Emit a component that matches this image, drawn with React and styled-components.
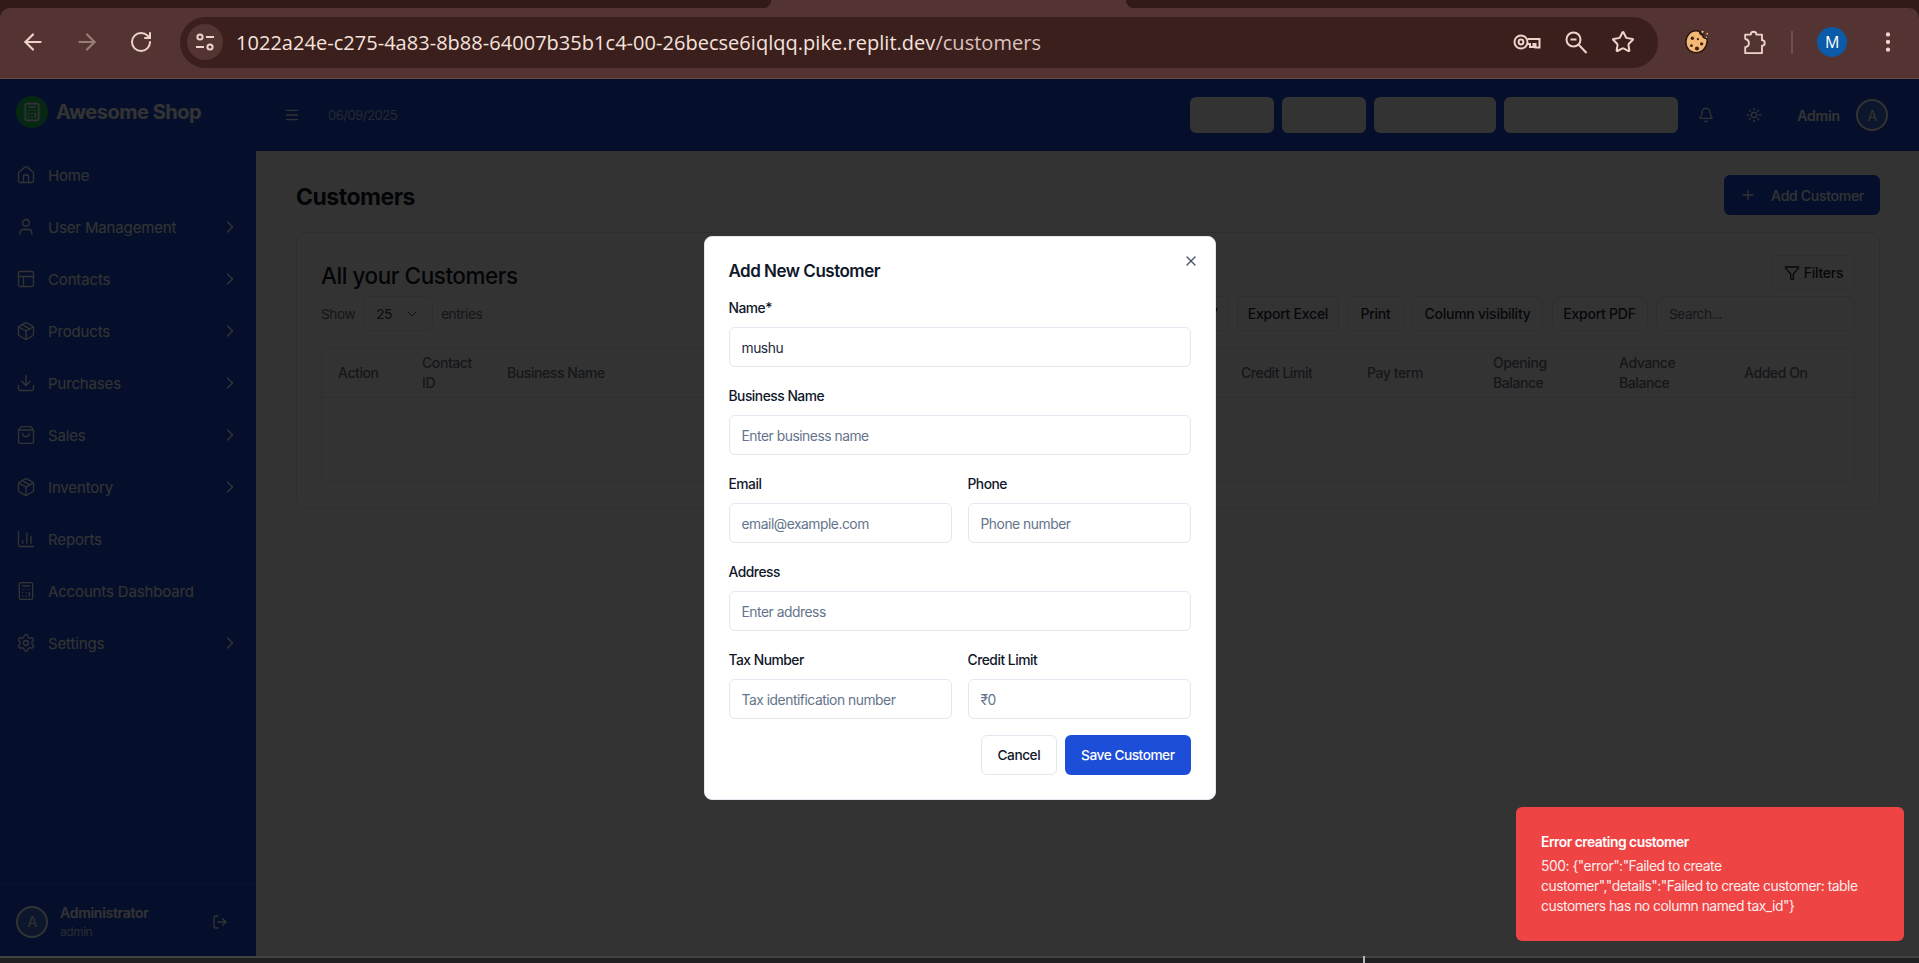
import React from "react";
import styled, { createGlobalStyle } from "styled-components";
import {
  ArrowLeft,
  ArrowRight,
  Bell,
  Calculator,
  ChartColumn,
  ChevronDown,
  ChevronRight,
  Download,
  EllipsisVertical,
  Filter,
  Home,
  LogOut,
  Menu,
  Package,
  PanelsTopLeft,
  Plus,
  RotateCw,
  Settings,
  ShoppingBag,
  Star,
  Sun,
  User,
  X,
} from "lucide-react";

const navItems = [
  { label: "Home", icon: Home },
  { label: "User Management", icon: User, more: true },
  { label: "Contacts", icon: PanelsTopLeft, more: true },
  { label: "Products", icon: Package, more: true },
  { label: "Purchases", icon: Download, more: true },
  { label: "Sales", icon: ShoppingBag, more: true },
  { label: "Inventory", icon: Package, more: true },
  { label: "Reports", icon: ChartColumn },
  { label: "Accounts Dashboard", icon: Calculator },
  { label: "Settings", icon: Settings, more: true },
];

const columns = [
  "Action",
  "Contact ID",
  "Business Name",
  "Credit Limit",
  "Pay term",
  "Opening Balance",
  "Advance Balance",
  "Added On",
];

function SiteInfoIcon() {
  return (
    <svg width="22" height="22" viewBox="0 0 22 22" fill="none" stroke="currentColor" strokeWidth="2">
      <circle cx="6" cy="6" r="2.6" />
      <path d="M12 6h8" />
      <circle cx="16" cy="16" r="2.6" />
      <path d="M2 16h8" />
    </svg>
  );
}

function KeyIcon() {
  return (
    <svg width="28" height="20" viewBox="0 0 28 20" fill="none" stroke="currentColor" strokeWidth="2">
      <circle cx="8" cy="10" r="6.5" />
      <circle cx="8" cy="10" r="2.4" />
      <path d="M14.5 7h12v8.5h-4V12h-2v3h-3.5v-3h-2.5" />
    </svg>
  );
}

function ZoomOutIcon() {
  return (
    <svg width="24" height="24" viewBox="0 0 24 24" fill="none" stroke="currentColor" strokeWidth="2">
      <circle cx="9.500" cy="9.500" r="7" />
      <path d="M6.500 9.500h6" />
      <path d="M14.500 14.500l8 8.500" />
    </svg>
  );
}

function CookieIcon() {
  return (
    <svg width="26" height="28" viewBox="0 0 28 30">
      <path
        d="M13 3c1.500 0 3 .3 4 1-.5 2 1 3.500 3 3.500.2 2 1.500 3.500 3.500 3.500 1 .2 1.500 1 1.500 2.500 0 7-5 13-12 13S2 21.500 2 15 6.500 3 13 3z"
        fill="#f3b873"
        stroke="#2b1712"
        strokeWidth="1.600"
      />
      <circle cx="9" cy="11" r="1.800" fill="#3d2417" />
      <circle cx="15" cy="12" r="1.200" fill="#3d2417" />
      <circle cx="8" cy="19" r="1.500" fill="#3d2417" />
      <circle cx="14" cy="22" r="2.200" fill="#3d2417" />
      <circle cx="19" cy="17" r="1.800" fill="#3d2417" />
      <circle cx="20" cy="4" r="1.800" fill="#f3b873" stroke="#2b1712" />
      <circle cx="25" cy="6" r="1" fill="#f3b873" />
      <circle cx="24" cy="10" r=".8" fill="#f3b873" />
    </svg>
  );
}

function PuzzleIcon() {
  return (
    <svg width="25" height="26" viewBox="0 0 26 28" fill="none" stroke="currentColor" strokeWidth="2" strokeLinejoin="round">
      <path d="M3 6h6a3 3 0 0 1 6 0h6v6a3 3 0 0 1 0 6v8H3v-6.500c3-.5 4-2.300 4-4.500s-1-3.500-4-4.500z" />
    </svg>
  );
}

function BrowserBar() {
  return (
    <Chrome>
      <TabStrip>
        <ActiveTab />
      </TabStrip>
      <Toolbar>
        <NavIcon><ArrowLeft size={26} /></NavIcon>
        <NavIcon $off><ArrowRight size={26} /></NavIcon>
        <NavIcon><RotateCw size={24} /></NavIcon>
        <UrlPill>
          <SiteInfo><SiteInfoIcon /></SiteInfo>
          <UrlText>
            1022a24e-c275-4a83-8b88-64007b35b1c4-00-26becse6iqlqq.pike.replit.dev
            <UrlPath>/customers</UrlPath>
          </UrlText>
          <UrlActions>
            <KeyIcon />
            <ZoomOutIcon />
            <Star size={24} />
          </UrlActions>
        </UrlPill>
        <ExtensionSlot><CookieIcon /></ExtensionSlot>
        <ExtensionSlot $gap={3}><PuzzleIcon /></ExtensionSlot>
        <BarDivider />
        <ProfileBadge>M</ProfileBadge>
        <KebabSlot><EllipsisVertical size={26} /></KebabSlot>
      </Toolbar>
    </Chrome>
  );
}

function Sidebar() {
  return (
    <SideColumn>
      <Brand>
        <BrandMark><Calculator size={20} /></BrandMark>
        <BrandName>Awesome Shop</BrandName>
      </Brand>
      <Nav>
        {navItems.map((item) => (
          <NavRow key={item.label}>
            <item.icon size={20} strokeWidth={1.6} />
            <NavLabel>{item.label}</NavLabel>
            {item.more && <ChevronRight size={20} strokeWidth={1.6} />}
          </NavRow>
        ))}
      </Nav>
      <SideFooter>
        <Avatar>A</Avatar>
        <UserInfo>
          <UserName>Administrator</UserName>
          <UserRole>admin</UserRole>
        </UserInfo>
        <LogOut size={16} />
      </SideFooter>
    </SideColumn>
  );
}

function TopHeader() {
  return (
    <TopBar>
      <Menu size={16} />
      <DateText>06/09/2025</DateText>
      <TopActions>
        <BlankButton $w={84} />
        <BlankButton $w={84} />
        <BlankButton $w={122} />
        <BlankButton $w={174} />
        <TopIcons>
          <Bell size={16} />
          <Sun size={16} />
        </TopIcons>
        <AdminName>Admin</AdminName>
        <Avatar>A</Avatar>
      </TopActions>
    </TopBar>
  );
}

function CustomersCard() {
  return (
    <Card>
      <CardTop>
        <CardTitle>All your Customers</CardTitle>
        <ToolButton $w={83}>
          <Filter size={16} />
          Filters
        </ToolButton>
      </CardTop>
      <Controls>
        <MutedText>Show</MutedText>
        <PageSize>
          25
          <ChevronDown size={16} strokeWidth={1.5} />
        </PageSize>
        <MutedText>entries</MutedText>
        <ControlsRight>
          <ToolButton $w={96}>Export CSV</ToolButton>
          <ToolButton $w={102}>Export Excel</ToolButton>
          <ToolButton $w={56}>Print</ToolButton>
          <ToolButton $w={131}>Column visibility</ToolButton>
          <ToolButton $w={96}>Export PDF</ToolButton>
          <SearchBox placeholder="Search..." />
        </ControlsRight>
      </Controls>
      <Table>
        <TableHead>
          {columns.map((c) => (
            <HeadCell key={c}>{c}</HeadCell>
          ))}
        </TableHead>
        <TableBody />
      </Table>
    </Card>
  );
}

function AddCustomerModal() {
  return (
    <Overlay>
      <Modal>
        <ModalTitle>Add New Customer</ModalTitle>
        <CloseIcon><X size={16} /></CloseIcon>
        <Form>
          <Field>
            <FieldLabel>Name*</FieldLabel>
            <TextInput defaultValue="mushu" />
          </Field>
          <Field>
            <FieldLabel>Business Name</FieldLabel>
            <TextInput placeholder="Enter business name" />
          </Field>
          <TwoCols>
            <Field>
              <FieldLabel>Email</FieldLabel>
              <TextInput placeholder="email@example.com" />
            </Field>
            <Field>
              <FieldLabel>Phone</FieldLabel>
              <TextInput placeholder="Phone number" />
            </Field>
          </TwoCols>
          <Field>
            <FieldLabel>Address</FieldLabel>
            <TextInput placeholder="Enter address" />
          </Field>
          <TwoCols>
            <Field>
              <FieldLabel>Tax Number</FieldLabel>
              <TextInput placeholder="Tax identification number" />
            </Field>
            <Field>
              <FieldLabel>Credit Limit</FieldLabel>
              <TextInput placeholder="₹0" />
            </Field>
          </TwoCols>
        </Form>
        <ModalActions>
          <CancelButton>Cancel</CancelButton>
          <SaveButton>Save Customer</SaveButton>
        </ModalActions>
      </Modal>
    </Overlay>
  );
}

export default function App() {
  return (
    <>
      <GlobalStyle />
      <Window>
        <BrowserBar />
        <AppArea>
          <Sidebar />
          <RightColumn>
            <TopHeader />
            <Content>
              <PageHead>
                <PageTitle>Customers</PageTitle>
                <AddButton>
                  <Plus size={16} />
                  Add Customer
                </AddButton>
              </PageHead>
              <CustomersCard />
            </Content>
          </RightColumn>
          <AddCustomerModal />
          <Toast>
            <ToastTitle>Error creating customer</ToastTitle>
            <ToastText>
              500: {'{"error":"Failed to create customer","details":"Failed to create customer: table customers has no column named tax_id"}'}
            </ToastText>
          </Toast>
        </AppArea>
        <TaskStrip>
          <TaskTick />
        </TaskStrip>
      </Window>
    </>
  );
}

const GlobalStyle = createGlobalStyle`
  * {
    box-sizing: border-box;
  }
  html, body {
    margin: 0;
    height: 100%;
    overflow: hidden;
    background: #333;
    font-family: Inter, "Liberation Sans", sans-serif;
    letter-spacing: -0.03em;
  }
  #root {
    height: 100%;
  }
  input, button {
    letter-spacing: inherit;
  }
`;

const Window = styled.div`
  display: flex;
  flex-direction: column;
  height: 963px;
`;

const Chrome = styled.div`
  flex: none;
  height: 79px;
  background: #321b17;
`;

const TabStrip = styled.div`
  height: 8px;
  padding-left: 771px;
`;

const ActiveTab = styled.div`
  position: relative;
  width: 355px;
  height: 8px;
  background: #533432;

  &::before,
  &::after {
    content: "";
    position: absolute;
    bottom: 0;
    width: 8px;
    height: 8px;
  }
  &::before {
    left: -8px;
    background: radial-gradient(circle at 0 0, transparent 8px, #533432 8.5px);
  }
  &::after {
    right: -8px;
    background: radial-gradient(circle at 100% 0, transparent 8px, #533432 8.5px);
  }
`;

const Toolbar = styled.div`
  display: flex;
  align-items: center;
  height: 71px;
  padding: 0 18px 2px 6px;
  background: #533432;
  border-bottom: 1px solid #6b4a46;
  border-radius: 10px 10px 0 0;
  color: #efd3cb;
`;

const NavIcon = styled.div`
  display: flex;
  justify-content: center;
  width: 54px;
  opacity: ${(p) => (p.$off ? 0.45 : 1)};
`;

const UrlPill = styled.div`
  display: flex;
  align-items: center;
  width: 1478px;
  height: 51px;
  margin: 0 12px;
  padding: 0 23px 0 7px;
  background: #3a1f1c;
  border-radius: 26px;
`;

const SiteInfo = styled.div`
  display: flex;
  align-items: center;
  justify-content: center;
  flex: none;
  width: 36px;
  height: 36px;
  border-radius: 50%;
  background: #533432;
`;

const UrlText = styled.div`
  margin-left: 13px;
  font-family: "Open Sans", sans-serif;
  font-size: 20px;
  letter-spacing: 0.03px;
  white-space: nowrap;
  color: #f6e2dc;
`;

const UrlPath = styled.span`
  color: #dcc3bc;
`;

const UrlActions = styled.div`
  display: flex;
  align-items: center;
  gap: 23px;
  margin-left: auto;
`;

const ExtensionSlot = styled.div`
  display: flex;
  justify-content: center;
  width: 54px;
  margin-left: ${(p) => p.$gap || 0}px;
`;

const BarDivider = styled.div`
  width: 2px;
  height: 23px;
  margin: 0 24px 0 10px;
  background: #6e4f4b;
`;

const ProfileBadge = styled.div`
  display: flex;
  align-items: center;
  justify-content: center;
  width: 30px;
  height: 30px;
  border-radius: 50%;
  background: #0b5ba8;
  font-family: "Open Sans", sans-serif;
  font-size: 16px;
  color: #fff;
`;

const KebabSlot = styled.div`
  display: flex;
  justify-content: center;
  width: 26px;
  margin-left: 28px;
`;

const AppArea = styled.div`
  position: relative;
  flex: 1;
  display: flex;
  min-height: 0;
  background: #fff;
`;

const SideColumn = styled.aside`
  flex: none;
  display: flex;
  flex-direction: column;
  width: 256px;
  background: #1a4bd4;
  color: #fff;
`;

const Brand = styled.div`
  display: flex;
  align-items: center;
  gap: 8px;
  height: 70px;
  padding: 0 16px 4px;
`;

const BrandMark = styled.div`
  display: flex;
  align-items: center;
  justify-content: center;
  width: 32px;
  height: 32px;
  border-radius: 50%;
  background: #22c55e;
`;

const BrandName = styled.div`
  font-size: 20px;
  font-weight: 700;
`;

const Nav = styled.nav`
  display: flex;
  flex-direction: column;
`;

const NavRow = styled.div`
  display: flex;
  align-items: center;
  gap: 12px;
  height: 52px;
  padding: 0 16px;
`;

const NavLabel = styled.span`
  flex: 1;
  font-size: 15px;
  letter-spacing: -0.01em;
`;

const SideFooter = styled.div`
  display: flex;
  align-items: center;
  gap: 12px;
  height: 72px;
  margin-top: auto;
  padding: 2px 28px 0 16px;
  border-top: 1px solid #2a5ee6;
`;

const Avatar = styled.div`
  flex: none;
  display: flex;
  align-items: center;
  justify-content: center;
  width: 32px;
  height: 32px;
  border: 2px solid #fff;
  border-radius: 50%;
  background: #3f6fe0;
  font-size: 14px;
  color: #fff;
`;

const UserInfo = styled.div`
  flex: 1;
`;

const UserName = styled.div`
  font-size: 14px;
  font-weight: 600;
  line-height: 20px;
  letter-spacing: -0.02em;
`;

const UserRole = styled.div`
  font-size: 12px;
  line-height: 17px;
  color: #bfd0f8;
`;

const RightColumn = styled.div`
  flex: 1;
  display: flex;
  flex-direction: column;
  min-width: 0;
`;

const TopBar = styled.header`
  flex: none;
  display: flex;
  align-items: center;
  height: 72px;
  padding: 0 31px 0 28px;
  background: #1a4bd4;
  color: #fff;
`;

const DateText = styled.span`
  margin-left: 28px;
  font-size: 13px;
  color: #dbe6ff;
  opacity: 0.8;
`;

const TopActions = styled.div`
  display: flex;
  align-items: center;
  gap: 8px;
  margin-left: auto;
`;

const BlankButton = styled.div`
  width: ${(p) => p.$w}px;
  height: 36px;
  border-radius: 6px;
  background: #fff;
`;

const TopIcons = styled.div`
  display: flex;
  gap: 32px;
  margin: 0 27px 0 12px;
`;

const AdminName = styled.span`
  margin-right: 8px;
  font-size: 14px;
  font-weight: 600;
  letter-spacing: -0.01em;
`;

const Content = styled.main`
  flex: 1;
  padding: 24px 39px 0 40px;
`;

const PageHead = styled.div`
  display: flex;
  align-items: center;
  justify-content: space-between;
  height: 40px;
  margin-bottom: 17px;
`;

const PageTitle = styled.h1`
  margin: 3px 0 0;
  font-size: 23px;
  font-weight: 700;
  letter-spacing: -0.5px;
  color: #111827;
`;

const AddButton = styled.button`
  display: flex;
  align-items: center;
  gap: 15px;
  height: 40px;
  padding: 0 16px;
  border: 0;
  border-radius: 6px;
  background: #1a4bd4;
  font: 500 14px Inter, sans-serif;
  letter-spacing: -0.02em;
  color: #fff;
`;

const Card = styled.section`
  padding: 22px 24px 25px;
  border: 1px solid #e5e7eb;
  border-radius: 8px;
  background: #fff;
`;

const CardTop = styled.div`
  display: flex;
  align-items: center;
  justify-content: space-between;
  height: 35px;
`;

const CardTitle = styled.h2`
  margin: 6px 0 0;
  font-size: 22.5px;
  font-weight: 500;
  letter-spacing: -0.45px;
  color: #111827;
`;

const ToolButton = styled.button`
  flex: none;
  display: flex;
  align-items: center;
  justify-content: center;
  gap: 4px;
  width: ${(p) => p.$w}px;
  height: 35px;
  padding: 0;
  border: 1px solid #e5e7eb;
  border-radius: 6px;
  background: #fff;
  font: 500 14px Inter, sans-serif;
  letter-spacing: -0.25px;
  color: #1f2937;
`;

const Controls = styled.div`
  display: flex;
  align-items: center;
  gap: 8px;
  height: 35px;
  margin-top: 6px;
`;

const MutedText = styled.span`
  font-size: 13.700px;
  color: #6b7280;
`;

const PageSize = styled.div`
  display: flex;
  align-items: center;
  justify-content: space-between;
  width: 70px;
  height: 35px;
  padding: 0 12px;
  border: 1px solid #e5e7eb;
  border-radius: 6px;
  font-size: 13.700px;
  color: #374151;
`;

const ControlsRight = styled.div`
  display: flex;
  align-items: center;
  gap: 8.500px;
  margin-left: auto;
`;

const SearchBox = styled.input`
  width: 199px;
  height: 35px;
  padding: 0 12px;
  border: 1px solid #e5e7eb;
  border-radius: 6px;
  font: 13.700px Inter, sans-serif;

  &::placeholder {
    color: #6b7280;
  }
`;

const Table = styled.div`
  margin-top: 16px;
  border: 1px solid #e5e7eb;
  border-radius: 6px;
`;

const TableHead = styled.div`
  display: grid;
  grid-template-columns: 84px 85px 734px 126px 126px 126px 125px 1fr;
  align-items: center;
  height: 50px;
  border-bottom: 1px solid #e5e7eb;
`;

const HeadCell = styled.div`
  padding: 0 16px;
  font-size: 14px;
  font-weight: 500;
  line-height: 20px;
  letter-spacing: -0.03em;
  color: #6b7280;
`;

const TableBody = styled.div`
  height: 83px;
`;

const Overlay = styled.div`
  position: absolute;
  inset: 0;
  display: flex;
  align-items: center;
  justify-content: center;
  background: rgba(0, 0, 0, 0.8);
`;

const Modal = styled.div`
  position: relative;
  width: 512px;
  height: 564px;
  padding: 23px 24px 24px;
  border: 1px solid #e2e8f0;
  border-radius: 8px;
  background: #fff;
`;

const ModalTitle = styled.h3`
  margin: 0;
  font-size: 17px;
  font-weight: 600;
  line-height: 22px;
  letter-spacing: -0.5px;
  color: #0f172a;
`;

const CloseIcon = styled.div`
  position: absolute;
  top: 16px;
  right: 16px;
  display: flex;
  color: #475569;
`;

const Form = styled.div`
  display: flex;
  flex-direction: column;
  gap: 22px;
  margin-top: 19px;
`;

const TwoCols = styled.div`
  display: grid;
  grid-template-columns: 1fr 1fr;
  gap: 16px;
`;

const Field = styled.div`
  display: flex;
  flex-direction: column;
  gap: 12px;
`;

const FieldLabel = styled.label`
  font-size: 13.800px;
  font-weight: 500;
  line-height: 14px;
  color: #0f172a;
`;

const TextInput = styled.input`
  width: 100%;
  height: 40px;
  padding: 2px 12px 0;
  border: 1px solid #e2e8f0;
  border-radius: 6px;
  background: #fff;
  font: 13.850px Inter, sans-serif;
  color: #1e293b;
  outline: 0;

  &::placeholder {
    color: #64748b;
  }
`;

const ModalActions = styled.div`
  display: flex;
  justify-content: flex-end;
  gap: 8px;
  margin-top: 16px;
`;

const CancelButton = styled.button`
  height: 40px;
  padding: 0 16px;
  border: 1px solid #e2e8f0;
  border-radius: 6px;
  background: #fff;
  font: 500 13.700px Inter, sans-serif;
  color: #0f172a;
`;

const SaveButton = styled(CancelButton)`
  border: 0;
  background: #1d4ed8;
  color: #fff;
`;

const Toast = styled.div`
  position: absolute;
  right: 15px;
  bottom: 15px;
  width: 388px;
  height: 134px;
  padding: 25px 32px 24px 25px;
  border-radius: 6px;
  background: #ef4444;
  color: #fff;
`;

const ToastTitle = styled.div`
  font-size: 13.850px;
  font-weight: 600;
  line-height: 20px;
`;

const ToastText = styled.div`
  margin-top: 4px;
  font-size: 13.850px;
  line-height: 20px;
  opacity: 0.9;
`;

const TaskStrip = styled.div`
  position: relative;
  flex: none;
  height: 7px;
  border-top: 2px solid #434343;
  background: #1f1f22;
`;

const TaskTick = styled.div`
  position: absolute;
  left: 1363px;
  top: -2px;
  width: 2px;
  height: 7px;
  background: #b5b5b5;
`;
